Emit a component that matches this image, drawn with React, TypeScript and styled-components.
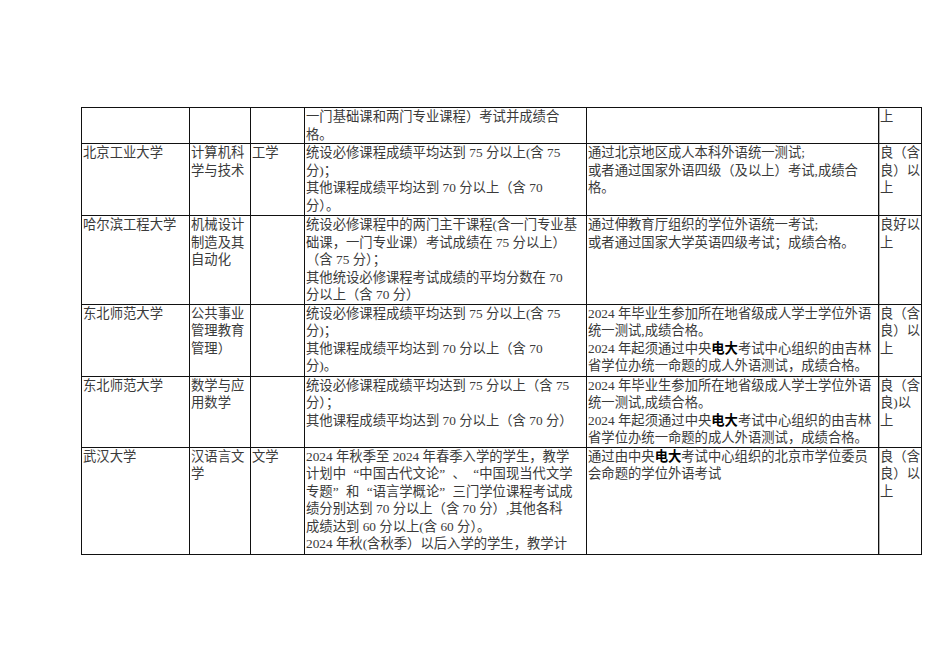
import React from "react";
import styled, { createGlobalStyle } from "styled-components";

const GlobalStyle = createGlobalStyle`
  html, body {
    margin: 0;
    padding: 0;
    background: #ffffff;
  }
  body {
    font-family: "Liberation Serif", "Noto Sans CJK SC", serif;
  }
`;

const Page = styled.div`
  width: 950px;
  height: 672px;
  padding: 107px 0 0 81px;
  box-sizing: border-box;
`;

const Table = styled.table`
  width: 840px;
  table-layout: fixed;
  border-collapse: collapse;
  font-size: 13.33px;
  line-height: 17.5px;
  color: #3a3a3a;
`;

const Row = styled.tr<{ $h: number }>`
  height: ${(p) => p.$h}px;
`;

const Cell = styled.td<{ $grayLeft?: boolean }>`
  border: 1px solid #111;
  padding: 0 0 0 1px;
  vertical-align: top;
  overflow: visible;
  box-shadow: ${(p) => (p.$grayLeft ? "inset 1px 0 0 #b0b0b0" : "none")};
`;

const Line = styled.div`
  white-space: nowrap;
`;

const Strong = styled.b`
  font-weight: 700;
  color: #000;
`;

// full-width curly quotes, as the Song face in the PDF sets them
const Quote = styled.span<{ $open?: boolean }>`
  display: inline-block;
  width: 1em;
  text-align: ${(p) => (p.$open ? "right" : "left")};
`;

type Content = React.ReactNode[];

const dianda = (before: string, after: string) => (
  <>
    {before}
    <Strong>电大</Strong>
    {after}
  </>
);

const O = () => <Quote $open>“</Quote>;
const C = () => <Quote>”</Quote>;

const widths = [108, 61, 54, 282, 292, 43];

const rows: { h: number; cells: Content[] }[] = [
  {
    h: 36,
    cells: [
      [],
      [],
      [],
      ["一门基础课和两门专业课程）考试并成绩合", "格。"],
      [],
      ["上"],
    ],
  },
  {
    h: 72,
    cells: [
      ["北京工业大学"],
      ["计算机科", "学与技术"],
      ["工学"],
      [
        "统设必修课程成绩平均达到 75 分以上(含 75",
        "分)；",
        "其他课程成绩平均达到 70 分以上（含 70",
        "分）。",
      ],
      [
        "通过北京地区成人本科外语统一测试;",
        "或者通过国家外语四级（及以上）考试,成绩合",
        "格。",
      ],
      ["良（含", "良）以", "上"],
    ],
  },
  {
    h: 88,
    cells: [
      ["哈尔滨工程大学"],
      ["机械设计", "制造及其", "自动化"],
      [],
      [
        "统设必修课程中的两门主干课程(含一门专业基",
        "础课，一门专业课）考试成绩在 75 分以上）",
        "（含 75 分）；",
        "其他统设必修课程考试成绩的平均分数在 70",
        "分以上（含 70 分）",
      ],
      [
        "通过伸教育厅组织的学位外语统一考试;",
        "或者通过国家大学英语四级考试；成绩合格。",
      ],
      ["良好以", "上"],
    ],
  },
  {
    h: 72,
    cells: [
      ["东北师范大学"],
      ["公共事业", "管理教育", "管理）"],
      [],
      [
        "统设必修课程成绩平均达到 75 分以上(含 75",
        "分)；",
        "其他课程成绩平均达到 70 分以上（含 70",
        "分)。",
      ],
      [
        "2024 年毕业生参加所在地省级成人学士学位外语",
        "统一测试,成绩合格。",
        dianda("2024 年起须通过中央", "考试中心组织的由吉林"),
        "省学位办统一命题的成人外语测试，成绩合格。",
      ],
      ["良（含", "良）以", "上"],
    ],
  },
  {
    h: 71,
    cells: [
      ["东北师范大学"],
      ["数学与应", "用数学"],
      [],
      [
        "统设必修课程成绩平均达到 75 分以上（含 75",
        "分）；",
        "其他课程成绩平均达到 70 分以上（含 70 分）",
      ],
      [
        "2024 年毕业生参加所在地省级成人学士学位外语",
        "统一测试,成绩合格。",
        dianda("2024 年起须通过中央", "考试中心组织的由吉林"),
        "省学位办统一命题的成人外语测试，成绩合格。",
      ],
      ["良（含", "良)以", "上"],
    ],
  },
  {
    h: 107,
    cells: [
      ["武汉大学"],
      ["汉语言文", "学"],
      ["文学"],
      [
        "2024 年秋季至 2024 年春季入学的学生，教学",
        <>
          计划中<O />中国古代文论<C />、<O />中国现当代文学
        </>,
        <>
          专题<C />和<O />语言学概论<C />三门学位课程考试成
        </>,
        "绩分别达到 70 分以上（含 70 分）,其他各科",
        "成绩达到 60 分以上(含 60 分）。",
        "2024 年秋(含秋季）以后入学的学生，教学计",
      ],
      [
        dianda("通过由中央", "考试中心组织的北京市学位委员"),
        "会命题的学位外语考试",
      ],
      ["良（含", "良）以", "上"],
    ],
  },
];

const App = () => {
  return (
    <Page lang="zh-CN">
      <GlobalStyle />
      <Table>
        <colgroup>
          {widths.map((w, i) => (
            <col key={i} style={{ width: w }} />
          ))}
        </colgroup>
        <tbody>
          {rows.map((row, r) => (
            <Row key={r} $h={row.h}>
              {row.cells.map((lines, c) => (
                <Cell key={c} $grayLeft={c === 5}>
                  {lines.map((line, l) => (
                    <Line key={l}>{line}</Line>
                  ))}
                </Cell>
              ))}
            </Row>
          ))}
        </tbody>
      </Table>
    </Page>
  );
};

export default App;
